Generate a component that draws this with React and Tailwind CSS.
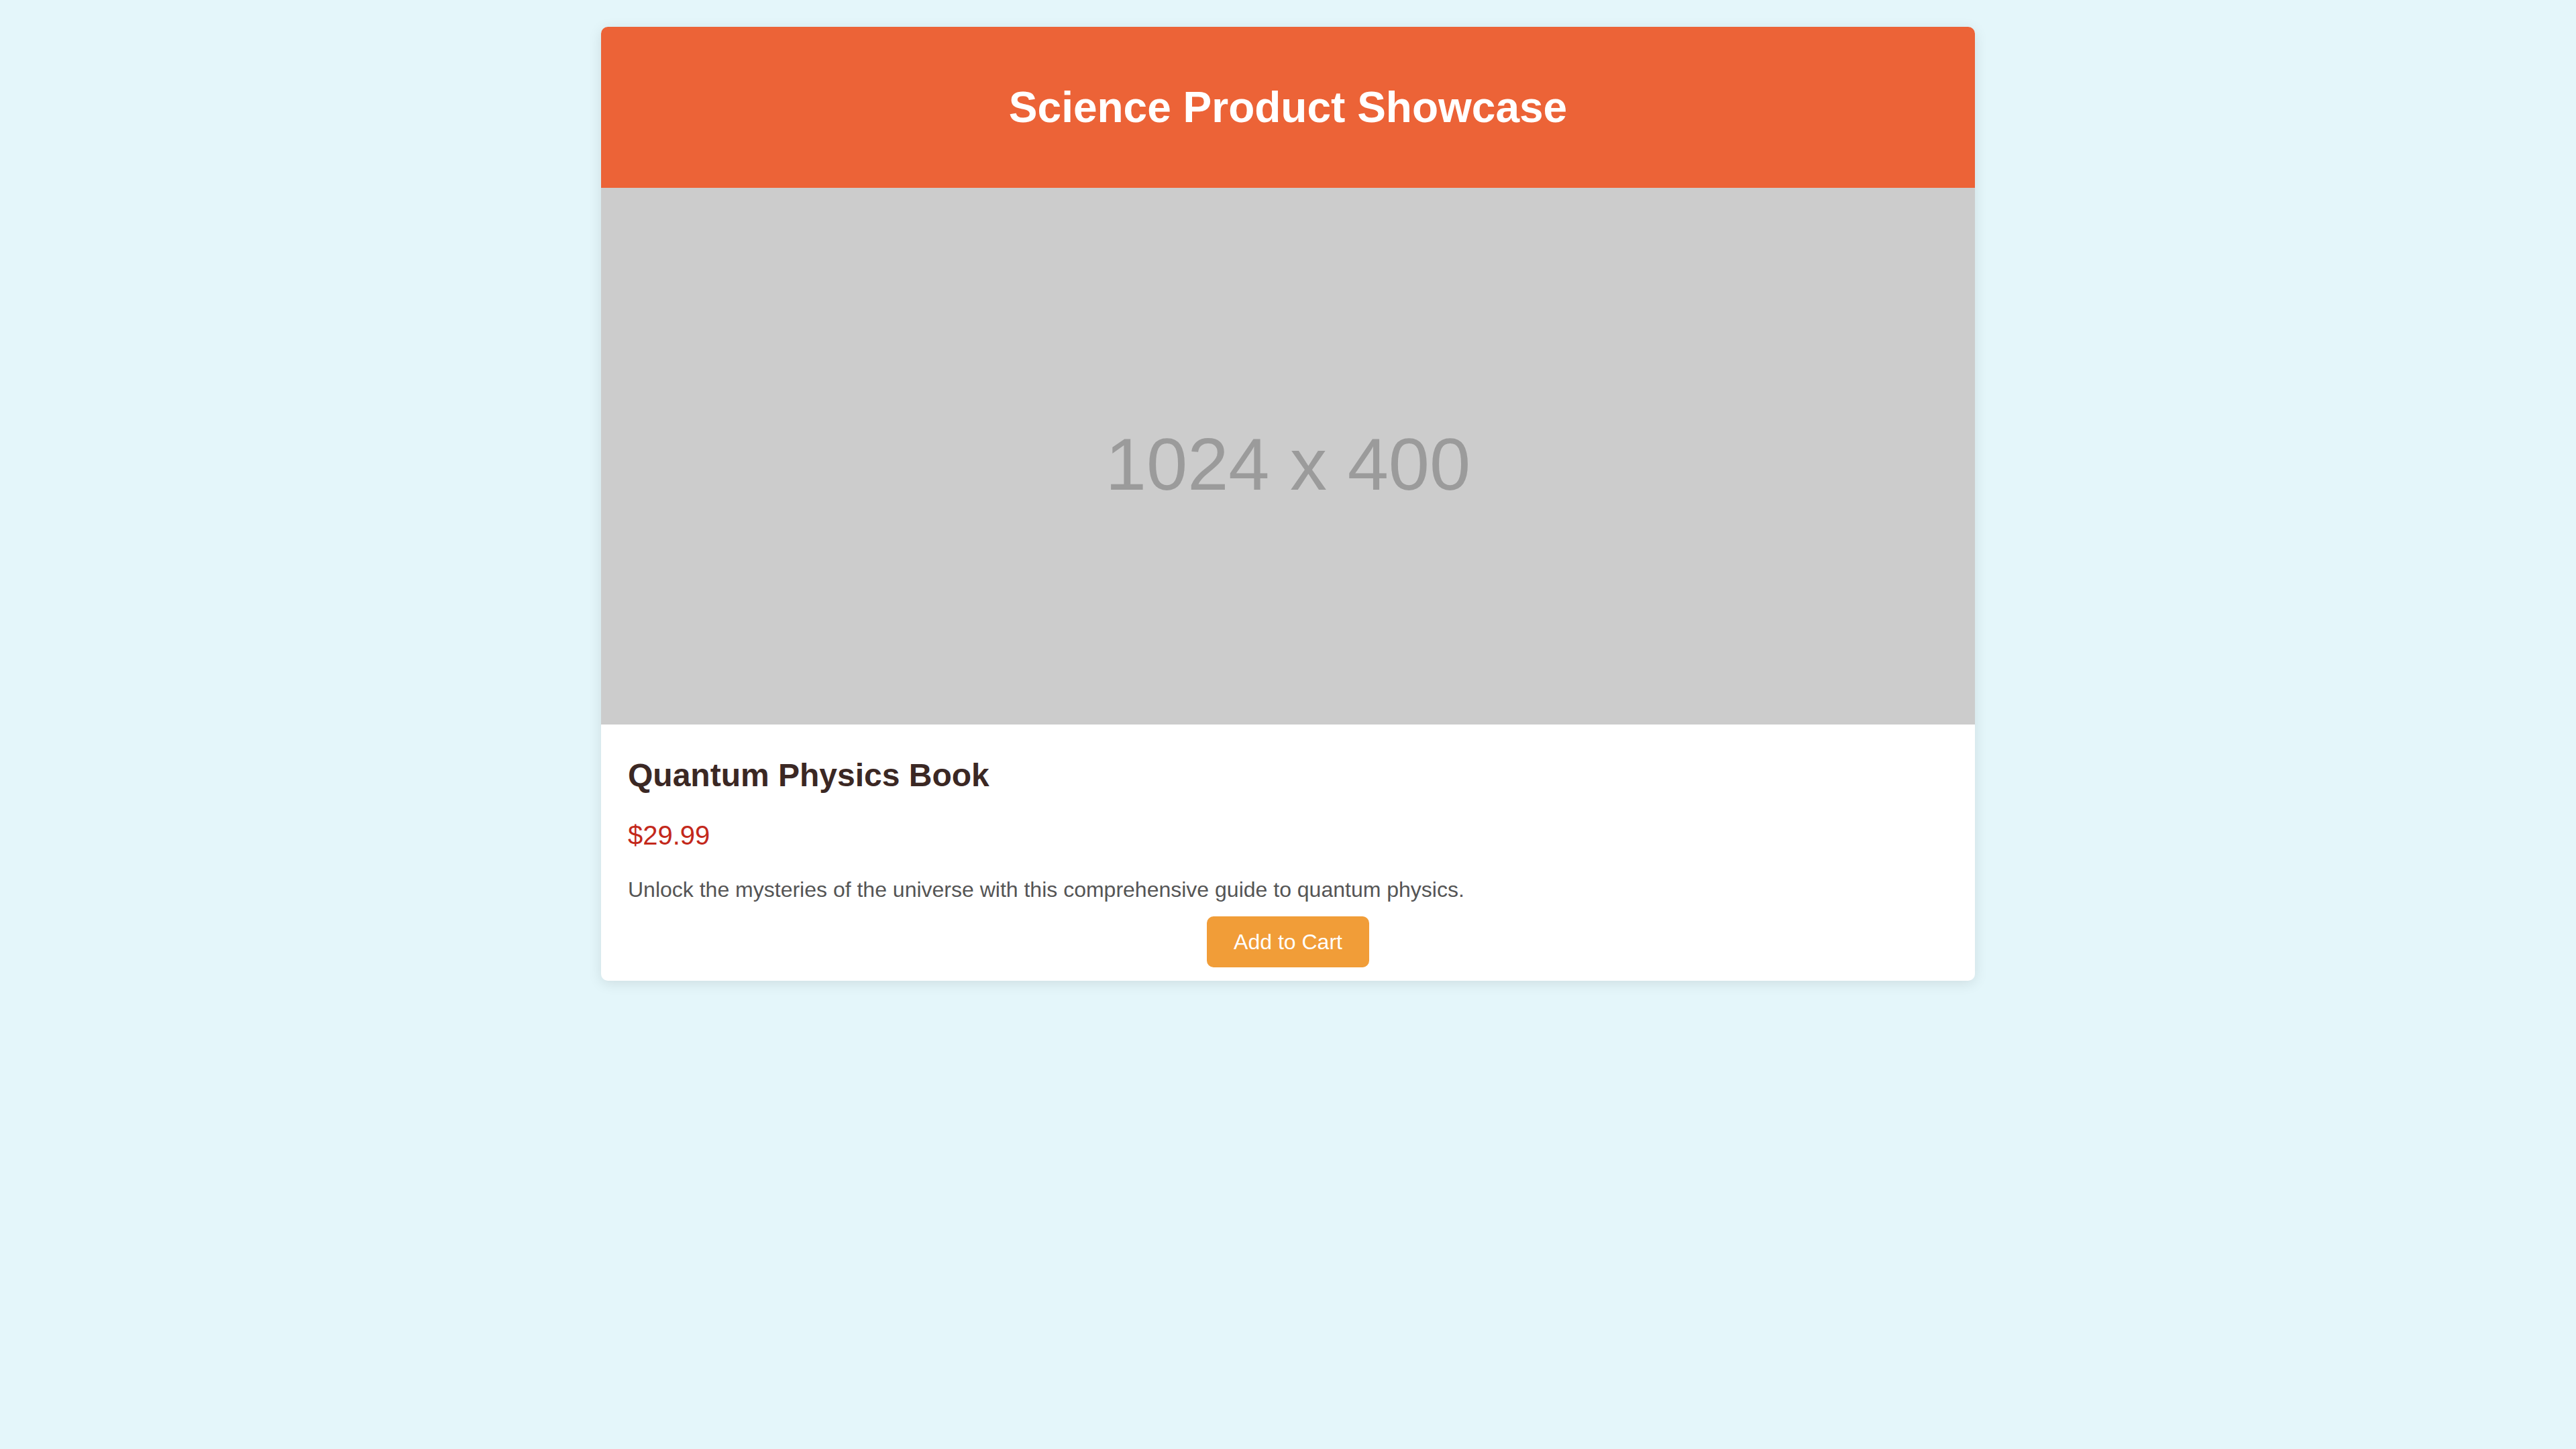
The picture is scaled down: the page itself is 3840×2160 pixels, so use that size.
function Placeholder() {
  return (
    <div
      role="img"
      aria-label="Quantum Physics Book"
      className="flex h-[800px] w-full items-center justify-center bg-[#cccccc]"
    >
      <span className="pt-6 text-[110px] leading-[124px] text-[#9b9b9b]">1024 x 400</span>
    </div>
  );
}

export default function App() {
  return (
    <div className="min-h-screen bg-[#e4f6fa] py-10 font-['Liberation_Sans',Arial,sans-serif]">
      <main className="mx-auto w-full max-w-[2048px] overflow-hidden rounded-[10px] bg-white shadow-[0_4px_20px_rgba(0,0,0,0.1)]">
        <header className="bg-[#ec6337] px-10 py-[83px] text-center text-white">
          <h1 className="text-[64px] leading-[74px] font-bold">Science Product Showcase</h1>
        </header>
        <Placeholder />
        <section className="flex flex-col px-10 pt-12 pb-5">
          <h2 className="text-[48px] leading-[56px] font-bold text-[#3b2824]">Quantum Physics Book</h2>
          <p className="mt-[38px] text-[40px] leading-[46px] text-[#c3281b]">$29.99</p>
          <p className="mt-[38px] text-[32px] leading-[40px] text-[#555555]">
            Unlock the mysteries of the universe with this comprehensive guide to quantum physics.
          </p>
          <button
            type="button"
            className="mt-5 cursor-pointer self-center rounded-[10px] bg-[#f19d38] px-10 py-5 text-[32px] leading-[36px] text-white"
          >
            Add to Cart
          </button>
        </section>
      </main>
    </div>
  );
}
